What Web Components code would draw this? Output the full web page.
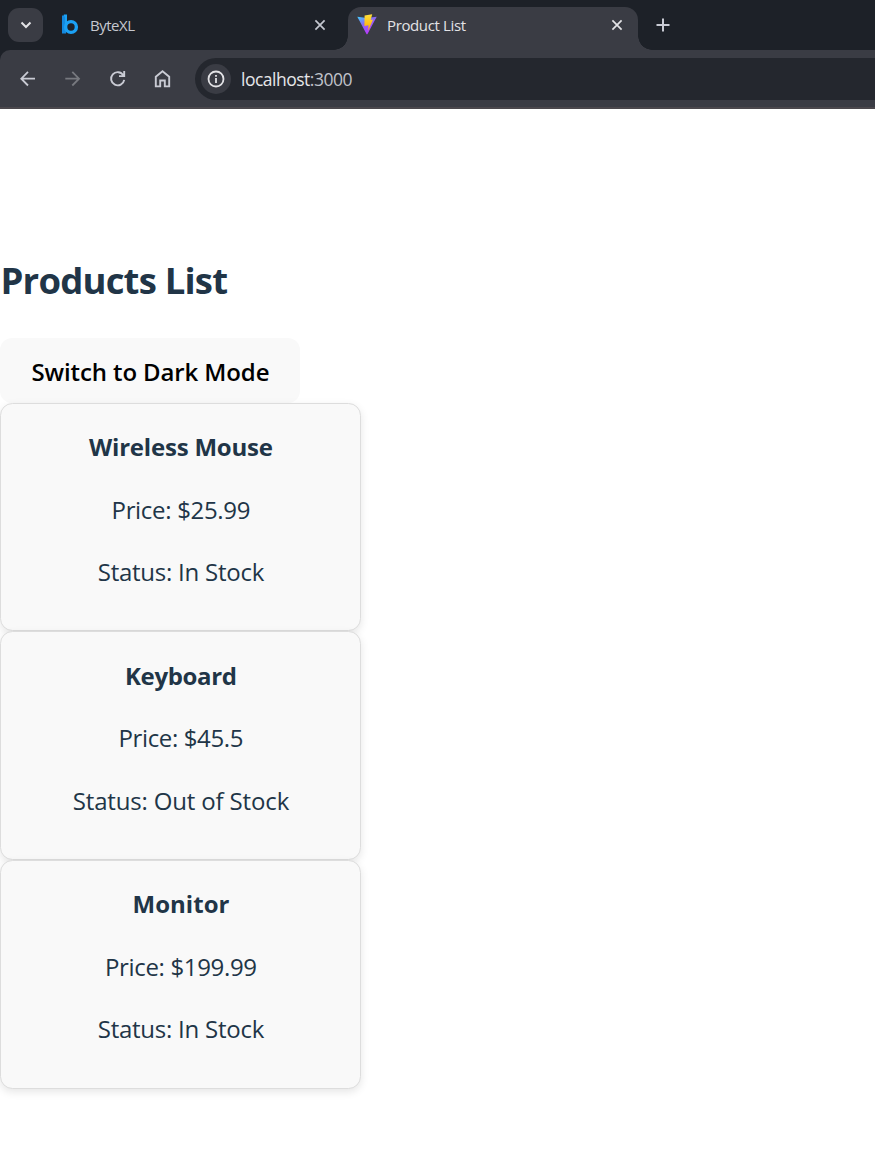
<!DOCTYPE html>
<html lang="en">
<head>
<meta charset="utf-8">
<title>Product List</title>
<style>
html,body{margin:0;height:100%;background:#fff;overflow:hidden}
body{font-family:"Open Sans","Noto Sans",sans-serif;color:#213547}
</style>
</head>
<body>
<app-window></app-window>
<script>
const define=(name,html)=>customElements.define(name,class extends HTMLElement{
  connectedCallback(){
    if(this.shadowRoot)return;
    const t=document.createElement('template');t.innerHTML=html;
    this.attachShadow({mode:'open'}).append(t.content.cloneNode(true));
  }
});

/* One line of text, tracked so that it fills the width given in its "width" attribute. */
customElements.define('fit-text',class extends HTMLElement{
  connectedCallback(){
    if(this.shadowRoot)return;
    this.attachShadow({mode:'open'}).innerHTML='<style>:host{display:inline-block;white-space:nowrap}span{display:inline-block}</style><span><slot></slot></span>';
    const span=this.shadowRoot.querySelector('span');
    const n=this.textContent.length, w=+this.getAttribute('width');
    const gap=(w-span.getBoundingClientRect().width)/(n-1);
    span.style.letterSpacing=gap.toFixed(3)+'px';
    span.style.marginRight=(-gap).toFixed(3)+'px';
  }
});

define('browser-tab',`<style>
:host{display:flex;align-items:center;box-sizing:border-box;height:43px;width:290px;padding:0 13.500px 7px 9px;font-size:15px;color:#c5c8d0;position:relative}
:host([active]){background:#3a3c44;border-radius:13px 13px 0 0;color:#e3e3e6;padding-right:14px}
:host([active])::before,:host([active])::after{content:"";position:absolute;bottom:0;width:14px;height:14px}
:host([active])::before{left:-14px;background:radial-gradient(circle at 0 0,transparent 13.5px,#3a3c44 14px)}
:host([active])::after{right:-14px;background:radial-gradient(circle at 100% 0,transparent 13.5px,#3a3c44 14px)}
.icon{width:20px;height:22px;display:flex}
.label{margin-left:10px;flex:1;line-height:20px}
svg{display:block}
</style><div class="icon"><slot name="icon"></slot></div><div class="label"><slot></slot></div>
<svg width="14" height="14" viewBox="0 0 14 14" fill="none" stroke="currentColor" stroke-width="1.7"><path d="M2.4 2.4 11.6 11.6M11.6 2.4 2.4 11.6"/></svg>`);

define('tab-strip',`<style>
:host{display:flex;height:50px;background:#1d2128;align-items:flex-end;box-sizing:border-box}
.search{width:35px;height:34px;border-radius:11px;background:#3a3c44;display:grid;place-items:center;margin:0 8px 8px 8px}
.first{width:289px;margin-right:8px}
.plus{margin:0 0 17px 17px;display:block}
.ic{display:block}
</style>
<div class="search"><svg width="14" height="14" viewBox="0 0 14 14" fill="none" stroke="#e3e3e6" stroke-width="2"><path d="M2.5 4.5 7 9l4.500-4.500"/></svg></div>
<browser-tab class="first"><svg class="ic" slot="icon" width="20" height="22" viewBox="0 0 20 22"><path d="M4 1.500V19.500" stroke="#1489df" stroke-width="4"/><circle cx="11" cy="13" r="5.400" fill="none" stroke="#1ba1f5" stroke-width="3.400"/><path d="M3.800 1.500h2.200V14" fill="none" stroke="#1ba1f5" stroke-width="2"/></svg><fit-text width="45">ByteXL</fit-text></browser-tab>
<browser-tab active><svg class="ic" slot="icon" width="20" height="21" viewBox="0 0 20 21"><defs><linearGradient id="v" x1="0" y1="0" x2=".6" y2="1"><stop offset="0" stop-color="#41d1ff"/><stop offset=".45" stop-color="#8a68f5"/><stop offset="1" stop-color="#bd34fe"/></linearGradient><linearGradient id="y" x1="0" y1="0" x2="0" y2="1"><stop offset="0" stop-color="#ffe03b"/><stop offset="1" stop-color="#ffa800"/></linearGradient></defs><path d="M.3 2.700 10 4.100l9.700-1.400L10.500 20q-.5.700-1 0Z" fill="url(#v)"/><path d="M7.600 1.600 15.200.2 13.700 6l2.300-.4-4.900 11.300.4-5.700-4.100.8Z" fill="url(#y)"/></svg><fit-text width="79">Product List</fit-text></browser-tab>
<svg class="plus" width="16" height="16" viewBox="0 0 16 16" stroke="#c9cbd4" stroke-width="2"><path d="M8 1.500v13M1.500 8h13"/></svg>`);

define('tool-bar',`<style>
:host{display:block;background:#1d2128}
.bar{display:flex;align-items:center;height:59px;box-sizing:border-box;border-bottom:2px solid #4b484d;background:#3a3c44;border-radius:10px 0 0 0}
.nav{display:flex;gap:25px;padding-left:18px;width:177px;box-sizing:content-box}
.nav svg{display:block;flex:none}
.url{flex:1;height:42px;border-radius:21px 0 0 21px;background:#24272e;display:flex;align-items:center;box-sizing:border-box;padding-left:6px;font-size:17.500px;color:#e6e6e9;margin-top:1px}
.info{width:30px;height:30px;border-radius:50%;background:#3a3c44;display:grid;place-items:center;margin-right:10px}
.port{color:#c0c2ca}
</style>
<div class="bar"><div class="nav">
<svg width="20" height="20" viewBox="0 0 20 20" fill="none" stroke="#c9cbd4" stroke-width="1.800"><path d="M17 9.700H3.500M10 2.900 3.300 9.700 10 16.500"/></svg>
<svg width="20" height="20" viewBox="0 0 20 20" fill="none" stroke="#77797f" stroke-width="1.800"><path d="M2.300 9.700H16M9.300 2.900 16 9.700 9.300 16.500"/></svg>
<svg width="20" height="20" viewBox="0 0 20 20" fill="none" stroke="#c9cbd4" stroke-width="1.900"><path d="M15.300 6.300A6.600 6.600 0 1 0 16.200 10.800M16.200 2V7.100H11"/></svg>
<svg width="20" height="20" viewBox="0 0 20 20" fill="none" stroke="#c9cbd4" stroke-width="1.900"><path d="M2.800 7.800 9.500 2.300l6.700 5.500V17.400H11.800V11.500H7.200V17.400H2.800Z"/></svg>
</div><div class="url"><div class="info"><svg width="20" height="20" viewBox="0 0 20 20" fill="none" stroke="#e3e3e6" stroke-width="1.800"><circle cx="10" cy="10" r="7.500"/><path d="M10 9v5M10 6v1.700"/></svg></div><fit-text width="111.5">localhost<span class="port">:3000</span></fit-text></div></div>`);

define('product-card',`<style>
:host{display:block;box-sizing:border-box;width:361px;height:228.400px;border:1px solid #ddd;border-radius:12.500px;background:#f9f9f9;box-shadow:0 3px 8px rgba(0,0,0,.1);padding:24.250px 0 0 1px;text-align:center;font-size:24px;line-height:37.500px}
:host(:last-of-type){height:229px}
div+div{margin-top:25px}
.name{font-weight:700}
</style><div class="name"><slot name="name"></slot></div><div><slot name="price"></slot></div><div><slot name="status"></slot></div>`);

define('product-page',`<style>
:host{display:block;padding-top:144px}
h1{margin:0 0 30px 0;text-indent:0;font-size:36.500px;line-height:55px;font-weight:700;padding-left:.5px}
button{display:block;width:300px;height:65px;border:0;border-radius:12px;background:#f9f9f9;color:#000;font:600 24px/37px "Open Sans","Noto Sans",sans-serif;padding:2px 0 0 1px;margin:0}
</style>
<h1><fit-text width="227.5">Products List</fit-text></h1>
<button><fit-text width="238">Switch to Dark Mode</fit-text></button>
<product-card><fit-text slot="name" width="184">Wireless Mouse</fit-text><fit-text slot="price" width="139">Price: $25.99</fit-text><fit-text slot="status" width="166.5">Status: In Stock</fit-text></product-card>
<product-card><fit-text slot="name" width="112">Keyboard</fit-text><fit-text slot="price" width="125">Price: $45.5</fit-text><fit-text slot="status" width="216.5">Status: Out of Stock</fit-text></product-card>
<product-card><fit-text slot="name" width="97">Monitor</fit-text><fit-text slot="price" width="152">Price: $199.99</fit-text><fit-text slot="status" width="166.5">Status: In Stock</fit-text></product-card>`);

define('app-window',`<style>:host{display:block;height:100%}</style><tab-strip></tab-strip><tool-bar></tool-bar><product-page></product-page>`);
</script>
</body>
</html>
